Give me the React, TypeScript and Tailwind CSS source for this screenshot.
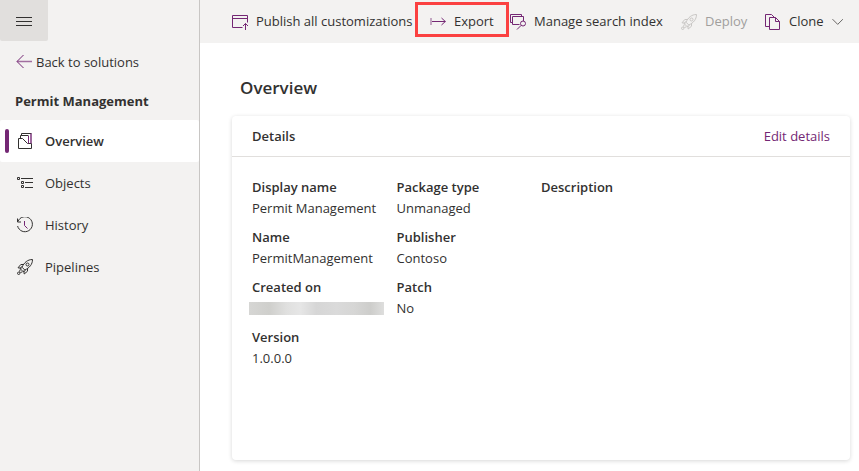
import type { ReactNode } from "react";

const iconBase = {
  width: 16,
  height: 16,
  viewBox: "0 0 16 16",
  fill: "none",
  stroke: "currentColor",
  strokeWidth: 1,
  "aria-hidden": true,
} as const;

function MenuIcon() {
  return (
    <svg {...iconBase}>
      <path d="M0 4.5h16M0 8.5h16M0 12.5h16" />
    </svg>
  );
}

function BackIcon() {
  return (
    <svg {...iconBase} className="shrink-0 text-[#742774]">
      <path d="M1 7.5h15" strokeWidth="1.5" opacity="0.65" />
      <path d="M7.500 1L1 7.500 7.500 14" />
    </svg>
  );
}

function OverviewIcon() {
  return (
    <svg {...iconBase}>
      <path d="M1.500 5.500h4l5 5h4v5h-13z" />
      <path d="M3.500 5.500V2.500h8" />
      <path d="M4.500 2.500V.5h10" />
      <path d="M11.500 3v7.500" stroke="#742774" />
      <path d="M14 .5v10" stroke="#742774" strokeWidth="1.400" />
    </svg>
  );
}

function ObjectsIcon() {
  return (
    <svg {...iconBase}>
      <path d="M.5 2.500h2v2h-2zM4.500 6.500h2v2h-2zM4.500 10.500h2v2h-2z" />
      <path d="M4 3.500h12M8 7.500h8M8 12.500h8" />
    </svg>
  );
}

function HistoryIcon() {
  return (
    <svg {...iconBase}>
      <path d="M.9 4.500A7.500 7.500 0 1 1 .6 9M.5 1.500v3.500h3.500" />
      <path d="M7.500 4v4.500l3 3" stroke="#742774" />
    </svg>
  );
}

function RocketIcon() {
  return (
    <svg {...iconBase}>
      <path d="M5 8.200C7.200 3.500 10.600.5 15.500.5c0 4.900-3 8.300-7.700 10.500L5 8.200z" />
      <path d="M6.500 5.500H3.800L1 8.800l3.500.4M10.500 9.500v2.700L7.200 15l-.4-3.500" />
      <path d="M4.500 7.500l-1.200 2.300 2.900 2.900 2.300-1.200" />
      <path d="M3.200 10.500l-.7 2.200M5.500 12.800l-2.200.7" />
      <circle cx="10.500" cy="5.500" r="1.500" />
      <circle cx="1.700" cy="14.300" r="1.200" />
    </svg>
  );
}

function PublishIcon() {
  return (
    <svg {...iconBase}>
      <path d="M10.500 13.500H.5v-12h15v7M.5 4.500h15" />
      <path d="M13.500 16V9.500M11 12L13.500 9.500l2.500 2.500" />
    </svg>
  );
}

function ExportIcon() {
  return (
    <svg {...iconBase}>
      <path d="M1 4v7" strokeWidth="1.500" opacity="0.500" />
      <path d="M2 7.500h13.500M11.500 4l3.800 3.500-3.800 3.500" />
    </svg>
  );
}

function SearchIndexIcon() {
  return (
    <svg {...iconBase}>
      <path d="M2.500 8.500h-2v-8h11v2" />
      <path d="M9.500 10.500h-7v-8h11v4.500" />
      <circle cx="13" cy="9.500" r="2.500" />
      <path d="M11.200 11.300L7 15.500" />
    </svg>
  );
}

function CloneIcon() {
  return (
    <svg {...iconBase}>
      <path d="M4 12.500H.5V.5h6l3 3" />
      <path d="M4.500 3.500h6l4 4v8h-10zM10.500 3.500v4h4" />
    </svg>
  );
}

function ChevronIcon() {
  return (
    <svg {...iconBase} width={12} height={12} viewBox="0 0 12 12" className="text-[#605e5c]">
      <path d="M.5 3L6 8.500 11.500 3" />
    </svg>
  );
}

const navItems = [
  { label: "Overview", icon: <OverviewIcon />, active: true },
  { label: "Objects", icon: <ObjectsIcon />, active: false },
  { label: "History", icon: <HistoryIcon />, active: false },
  { label: "Pipelines", icon: <RocketIcon />, active: false },
];

function Command({
  label,
  icon,
  width,
  disabled = false,
  children,
}: {
  label: string;
  icon: ReactNode;
  width: string;
  disabled?: boolean;
  children?: ReactNode;
}) {
  return (
    <button
      type="button"
      disabled={disabled}
      className={`relative flex h-full shrink-0 items-center gap-2 whitespace-nowrap px-2 disabled:text-[#a19f9d] ${width}`}
    >
      <span className={disabled ? "text-[#c8c6c4]" : "text-[#742774]"}>{icon}</span>
      {label}
      {children}
    </button>
  );
}

function Field({ label, children }: { label: string; children?: ReactNode }) {
  return (
    <div className="leading-[21px]">
      <dt className="font-semibold">{label}</dt>
      <dd className="flex min-h-[21px] items-center">{children}</dd>
    </div>
  );
}

export default function App() {
  return (
    <div className="flex min-h-screen bg-white font-['Open_Sans','Noto_Sans',sans-serif] text-[13px] text-[#323130]">
      <aside className="w-[200px] shrink-0 border-r border-[#c8c6c4] bg-[#f3f2f1]">
        <button
          type="button"
          aria-label="Toggle navigation"
          className="flex h-[41px] w-12 items-center justify-center rounded-b-xs bg-[#e1dfdd]"
        >
          <MenuIcon />
        </button>
        <a href="#solutions" className="flex h-[41px] items-center gap-1 pl-4">
          <BackIcon />
          <span className="pt-0.5">Back to solutions</span>
        </a>
        <h2 className="flex h-[38px] items-center pl-[15px] pt-0.5 font-bold">Permit Management</h2>
        <nav>
          {navItems.map((item) => (
            <a
              key={item.label}
              href={`#${item.label.toLowerCase()}`}
              aria-current={item.active ? "page" : undefined}
              className={`flex h-[42px] items-center ${item.active ? "rounded-xs bg-white font-semibold" : ""}`}
            >
              <span
                className={`ml-[5px] h-6 w-1 rounded-full ${item.active ? "bg-[#742774]" : ""}`}
              />
              <span className="ml-2 mr-3">{item.icon}</span>
              <span className="pt-0.5">{item.label}</span>
            </a>
          ))}
        </nav>
      </aside>

      <div className="flex min-w-0 flex-1 flex-col">
        <div className="flex h-[43px] items-center bg-[#f3f2f1] pl-6">
          <Command label="Publish all customizations" icon={<PublishIcon />} width="w-[198px]" />
          <Command label="Export" icon={<ExportIcon />} width="w-20">
            <span className="pointer-events-none absolute -inset-x-[7px] top-[2px] h-[35px] border-3 border-[#fb4141]" />
          </Command>
          <Command label="Manage search index" icon={<SearchIndexIcon />} width="w-[171px]" />
          <Command label="Deploy" icon={<RocketIcon />} width="w-[84px]" disabled />
          <Command label="Clone" icon={<CloneIcon />} width="w-[94px]">
            <ChevronIcon />
          </Command>
        </div>

        <main className="flex flex-1 flex-col pb-[11px] pl-8 pr-[9px]">
          <h1 className="flex h-[73px] items-center pb-2 pl-2 pt-6 text-[17px] font-semibold">
            Overview
          </h1>
          <section className="flex-1 rounded-sm bg-white shadow-[0_1px_4px_rgba(0,0,0,0.16)]">
            <header className="flex h-[41px] items-center justify-between border-b border-[#e1dfdd] px-5 pt-0.5">
              <h2 className="font-semibold">Details</h2>
              <a href="#edit" className="text-[#742774]">
                Edit details
              </a>
            </header>
            <dl className="grid grid-cols-4 gap-y-2 px-5 py-5">
              <Field label="Display name">Permit Management</Field>
              <Field label="Package type">Unmanaged</Field>
              <div className="col-span-2">
                <Field label="Description" />
              </div>
              <Field label="Name">PermitManagement</Field>
              <div className="col-span-3">
                <Field label="Publisher">Contoso</Field>
              </div>
              <Field label="Created on">
                <span className="-ml-[3px] h-[13px] w-[135px] bg-[linear-gradient(90deg,#d6d6d4,#cfcfcc_15%,#e0e0df_28%,#e6e6e6_38%,#d6d6d6_50%,#dadada_65%,#d6d6d5_78%,#cdcdcb_90%,#dededd)]" />
              </Field>
              <div className="col-span-3">
                <Field label="Patch">No</Field>
              </div>
              <Field label="Version">1.0.0.0</Field>
            </dl>
          </section>
        </main>
      </div>
    </div>
  );
}
